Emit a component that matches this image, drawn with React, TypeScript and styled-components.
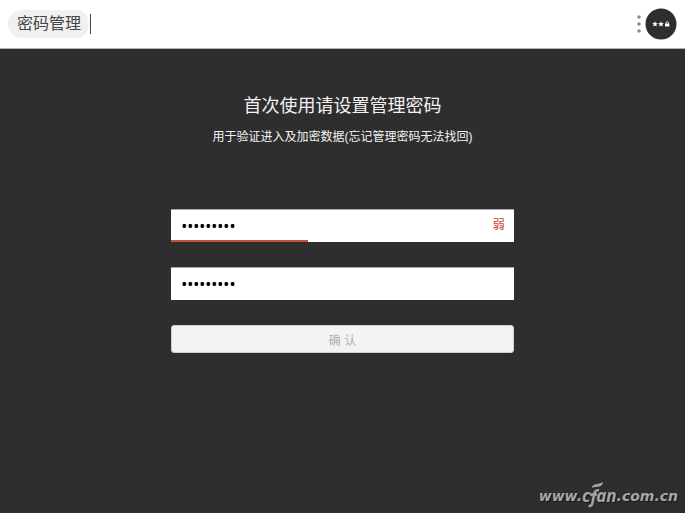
import React, { useState } from "react";
import styled, { createGlobalStyle } from "styled-components";

const GlobalStyle = createGlobalStyle`
  * { box-sizing: border-box; }
  body {
    margin: 0;
    background: #2e2e2e;
    font-family: "Liberation Sans", "Noto Sans CJK SC", sans-serif;
  }
`;

const Page = styled.div`
  min-height: 100vh;
  display: flex;
  flex-direction: column;
  background: #2e2e2e;
`;

const Header = styled.header`
  display: flex;
  align-items: center;
  height: 49px;
  padding: 0 8px;
  background: #fff;
  border-bottom: 1px solid #b4b4b4;
`;

const Tag = styled.span`
  padding: 0 8px 0 9px;
  border-radius: 14px;
  background: #f0f0f0;
  color: #444;
  font-size: 16px;
  line-height: 28px;
`;

const SearchInput = styled.input`
  flex: 1;
  min-width: 0;
  height: 20px;
  margin-left: 1px;
  padding: 0 4px;
  border: 0;
  border-left: 1px solid #444;
  outline: 0;
  background: transparent;
  font-size: 16px;
`;

const IconButton = styled.button`
  display: flex;
  padding: 0;
  border: 0;
  background: none;
`;

const Main = styled.main`
  flex: 1;
  display: flex;
  flex-direction: column;
  align-items: center;
  padding-top: 44px;
  color: #f2f2f2;
`;

const Title = styled.h1`
  margin: 0;
  font-size: 18px;
  font-weight: 400;
  line-height: 26px;
`;

const Hint = styled.p`
  margin: 9px 0 0;
  font-size: 12px;
  line-height: 18px;
`;

const Form = styled.form`
  width: 50%;
  margin-top: 63px;
  display: flex;
  flex-direction: column;
  gap: 25px;
`;

const Field = styled.div`
  position: relative;
  display: flex;
`;

const PasswordInput = styled.input`
  width: 100%;
  height: 33px;
  padding: 0 40px 0 10px;
  border: 0;
  border-top: 1px solid #a8a8a8;
  border-radius: 0;
  outline: 0;
  background: #fff;
  color: #000;
  font-family: "Noto Sans", sans-serif;
  font-size: 16px;
`;

const StrengthText = styled.span`
  position: absolute;
  top: 7px;
  right: 9px;
  color: #c8402f;
  font-size: 12px;
  line-height: 18px;
`;

const StrengthBar = styled.span`
  position: absolute;
  left: 0;
  bottom: 0;
  width: 40%;
  height: 2px;
  background: #c8503f;
`;

const Submit = styled.button`
  height: 28px;
  padding: 0;
  border: 1px solid #d0d0d0;
  border-radius: 3px;
  background: #f3f3f3;
  color: #b0b0b0;
  font-family: inherit;
  font-size: 12px;
`;

const Footer = styled.footer`
  display: flex;
  justify-content: flex-end;
  padding: 0 7px 3px;
`;

const SiteLink = styled.a`
  display: flex;
  align-items: center;
  color: #a6a6a6;
  font-family: "DejaVu Sans", sans-serif;
  font-size: 14px;
  font-style: italic;
  font-weight: 700;
  line-height: 28px;
  text-decoration: none;
  text-shadow: 1px 1px 1px #151515;
`;

const Brand = styled.span`
  display: flex;
  align-items: center;
  font-family: "Open Sans", sans-serif;
  font-size: 17px;
  font-weight: 700;
`;

function MoreIcon() {
  return (
    <svg width="9" height="20" viewBox="0 0 9 20" fill="#8c8c8c" aria-hidden="true">
      <circle cx="3" cy="3" r="1.8" />
      <circle cx="3" cy="10" r="1.8" />
      <circle cx="3" cy="17" r="1.8" />
    </svg>
  );
}

function VaultIcon() {
  return (
    <svg width="32" height="32" viewBox="0 0 32 32" aria-hidden="true">
      <circle cx="16" cy="16" r="15.5" fill="#2e2e2e" />
      <g fill="#fff">
        <path d="M10 13.3l.8 1.8 2 .2-1.5 1.3.5 2-1.8-1.1-1.8 1.1.5-2-1.5-1.3 2-.2z" />
        <path d="M16 13.3l.8 1.8 2 .2-1.5 1.3.5 2-1.8-1.1-1.8 1.1.5-2-1.5-1.3 2-.2z" />
        <rect x="20" y="15.5" width="4.4" height="3" rx=".4" />
      </g>
      <path d="M21 15.8v-1a1.2 1.2 0 0 1 2.4 0v1" fill="none" stroke="#fff" strokeWidth=".8" />
    </svg>
  );
}

function LeafMark() {
  return (
    <svg width="6" height="28" viewBox="0 0 6 28" aria-hidden="true" overflow="visible">
      <path d="M2 6C2 1 8 3 13 0C12 7 6 3.500 2 6z" fill="#a6a6a6" />
      <path d="M9 8.200C5.500 7.500 4.600 10 4 13L2.500 20.500C2 23.500 1 24.200-1.500 24M0 12.500H7" fill="none" stroke="#a6a6a6" strokeWidth="2.400" />
    </svg>
  );
}

export default function App() {
  const [query, setQuery] = useState("");
  const [password, setPassword] = useState("123456789");
  const [repeat, setRepeat] = useState("123456789");
  return (
    <Page>
      <GlobalStyle />
      <Header>
        <Tag>密码管理</Tag>
        <SearchInput aria-label="搜索" value={query} onChange={(e) => setQuery(e.target.value)} />
        <IconButton type="button" aria-label="更多"><MoreIcon /></IconButton>
        <IconButton type="button" aria-label="密码管理"><VaultIcon /></IconButton>
      </Header>
      <Main>
        <Title>首次使用请设置管理密码</Title>
        <Hint>用于验证进入及加密数据(忘记管理密码无法找回)</Hint>
        <Form onSubmit={(e) => e.preventDefault()}>
          <Field>
            <PasswordInput type="password" aria-label="管理密码" value={password} onChange={(e) => setPassword(e.target.value)} />
            <StrengthText>弱</StrengthText>
            <StrengthBar />
          </Field>
          <Field>
            <PasswordInput type="password" aria-label="确认密码" value={repeat} onChange={(e) => setRepeat(e.target.value)} />
          </Field>
          <Submit type="submit" disabled>确 认</Submit>
        </Form>
      </Main>
      <Footer>
        <SiteLink href="#">
          www.<Brand>c<LeafMark />an</Brand>.com.cn
        </SiteLink>
      </Footer>
    </Page>
  );
}
